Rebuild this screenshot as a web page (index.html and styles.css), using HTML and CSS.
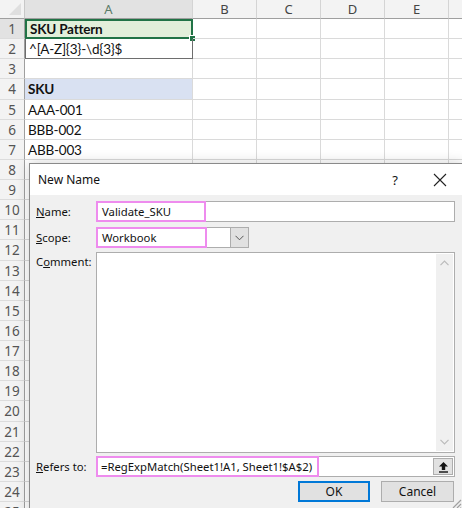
FILE: index.html
```html
<!DOCTYPE html>
<html lang="en">

<head>
    <meta charset="UTF-8">
    <title>New Name - Validate_SKU</title>
    <link rel="stylesheet" href="styles.css">
</head>

<body>
    <div class="sheet">
        <div class="corner"><span class="corner-tri"></span></div>
        <div class="col-head selected">A</div>
        <div class="col-head">B</div>
        <div class="col-head">C</div>
        <div class="col-head">D</div>
        <div class="col-head">E</div>
        <div class="col-head"></div>

        <div class="row-head selected">1</div>
        <div class="cell active bold pattern">SKU Pattern<span class="fill-handle"></span></div>
        <div class="cell"></div><div class="cell"></div><div class="cell"></div><div class="cell"></div><div class="cell"></div>

        <div class="row-head">2</div>
        <div class="cell boxed">^[A-Z]{3}-\d{3}$</div>
        <div class="cell"></div><div class="cell"></div><div class="cell"></div><div class="cell"></div><div class="cell"></div>

        <div class="row-head">3</div>
        <div class="cell"></div><div class="cell"></div><div class="cell"></div><div class="cell"></div><div class="cell"></div><div class="cell"></div>

        <div class="row-head">4</div>
        <div class="cell bold header-fill">SKU</div>
        <div class="cell"></div><div class="cell"></div><div class="cell"></div><div class="cell"></div><div class="cell"></div>

        <div class="row-head">5</div>
        <div class="cell">AAA-001</div>
        <div class="cell"></div><div class="cell"></div><div class="cell"></div><div class="cell"></div><div class="cell"></div>

        <div class="row-head">6</div>
        <div class="cell">BBB-002</div>
        <div class="cell"></div><div class="cell"></div><div class="cell"></div><div class="cell"></div><div class="cell"></div>

        <div class="row-head">7</div>
        <div class="cell">ABB-003</div>
        <div class="cell"></div><div class="cell"></div><div class="cell"></div><div class="cell"></div><div class="cell"></div>

        <div class="row-head">8</div><div class="cell"></div><div class="cell"></div><div class="cell"></div><div class="cell"></div><div class="cell"></div><div class="cell"></div>
        <div class="row-head">9</div><div class="cell"></div><div class="cell"></div><div class="cell"></div><div class="cell"></div><div class="cell"></div><div class="cell"></div>
        <div class="row-head">10</div><div class="cell"></div><div class="cell"></div><div class="cell"></div><div class="cell"></div><div class="cell"></div><div class="cell"></div>
        <div class="row-head">11</div><div class="cell"></div><div class="cell"></div><div class="cell"></div><div class="cell"></div><div class="cell"></div><div class="cell"></div>
        <div class="row-head">12</div><div class="cell"></div><div class="cell"></div><div class="cell"></div><div class="cell"></div><div class="cell"></div><div class="cell"></div>
        <div class="row-head">13</div><div class="cell"></div><div class="cell"></div><div class="cell"></div><div class="cell"></div><div class="cell"></div><div class="cell"></div>
        <div class="row-head">14</div><div class="cell"></div><div class="cell"></div><div class="cell"></div><div class="cell"></div><div class="cell"></div><div class="cell"></div>
        <div class="row-head">15</div><div class="cell"></div><div class="cell"></div><div class="cell"></div><div class="cell"></div><div class="cell"></div><div class="cell"></div>
        <div class="row-head">16</div><div class="cell"></div><div class="cell"></div><div class="cell"></div><div class="cell"></div><div class="cell"></div><div class="cell"></div>
        <div class="row-head">17</div><div class="cell"></div><div class="cell"></div><div class="cell"></div><div class="cell"></div><div class="cell"></div><div class="cell"></div>
        <div class="row-head">18</div><div class="cell"></div><div class="cell"></div><div class="cell"></div><div class="cell"></div><div class="cell"></div><div class="cell"></div>
        <div class="row-head">19</div><div class="cell"></div><div class="cell"></div><div class="cell"></div><div class="cell"></div><div class="cell"></div><div class="cell"></div>
        <div class="row-head">20</div><div class="cell"></div><div class="cell"></div><div class="cell"></div><div class="cell"></div><div class="cell"></div><div class="cell"></div>
        <div class="row-head">21</div><div class="cell"></div><div class="cell"></div><div class="cell"></div><div class="cell"></div><div class="cell"></div><div class="cell"></div>
        <div class="row-head">22</div><div class="cell"></div><div class="cell"></div><div class="cell"></div><div class="cell"></div><div class="cell"></div><div class="cell"></div>
        <div class="row-head">23</div><div class="cell"></div><div class="cell"></div><div class="cell"></div><div class="cell"></div><div class="cell"></div><div class="cell"></div>
        <div class="row-head">24</div><div class="cell"></div><div class="cell"></div><div class="cell"></div><div class="cell"></div><div class="cell"></div><div class="cell"></div>
        <div class="row-head">25</div><div class="cell"></div><div class="cell"></div><div class="cell"></div><div class="cell"></div><div class="cell"></div><div class="cell"></div>
    </div>

    <!-- New Name dialog floating over the sheet -->
    <div class="dialog">
        <div class="title-bar">
            <span class="title">New Name</span>
            <span class="title-btn">?</span>
            <span class="title-btn close">
                <svg width="14" height="14" viewBox="0 0 14 14"><path d="M1 1L13 13M13 1L1 13" stroke="#222" stroke-width="1.1" fill="none"/></svg>
            </span>
        </div>

        <div class="dialog-body">
            <div class="form-row">
                <label class="label"><u>N</u>ame:</label>
                <div class="field">
                    <span class="mark name-mark">Validate_SKU</span>
                </div>
            </div>

            <div class="form-row">
                <label class="label"><u>S</u>cope:</label>
                <div class="combo">
                    <span class="mark scope-mark">Workbook</span>
                    <span class="combo-btn">
                        <svg width="9" height="6" viewBox="0 0 9 6"><path d="M0.5 0.8L4.5 4.8L8.5 0.8" stroke="#555" stroke-width="1" fill="none"/></svg>
                    </span>
                </div>
            </div>

            <div class="form-row top">
                <label class="label">C<u>o</u>mment:</label>
                <div class="textarea">
                    <div class="scrollbar">
                        <svg width="9" height="6" viewBox="0 0 9 6"><path d="M0.5 5.2L4.5 1.2L8.5 5.2" stroke="#bbb" stroke-width="1.2" fill="none"/></svg>
                        <svg width="9" height="6" viewBox="0 0 9 6"><path d="M0.5 0.8L4.5 4.8L8.5 0.8" stroke="#bbb" stroke-width="1.2" fill="none"/></svg>
                    </div>
                </div>
            </div>

            <div class="form-row refers">
                <label class="label"><u>R</u>efers to:</label>
                <div class="field">
                    <span class="mark refers-mark">=RegExpMatch(Sheet1!A1, Sheet1!$A$2)</span>
                    <span class="collapse-btn">
                        <svg width="11" height="12" viewBox="0 0 11 12"><path d="M5.5 1L1 5.5H3.8V9H7.2V5.5H10Z" fill="#111"/><rect x="1" y="10.3" width="9" height="1.4" fill="#111"/></svg>
                    </span>
                </div>
            </div>

            <div class="button-row">
                <span class="button default">OK</span>
                <span class="button">Cancel</span>
            </div>

            <svg class="grip" width="12" height="12" viewBox="0 0 12 12"><path d="M11 3L3 11M11 7L7 11M11 10.5L10.5 11" stroke="#a0a0a0" stroke-width="1.2"/></svg>
        </div>
    </div>
</body>

</html>
```

FILE: styles.css
```css
:root {
    --grid-line: #dadada;
    --head-bg: #f3f3f3;
    --head-line: #9f9f9f;
    --excel-green: #217346;
    --dialog-bg: #f0f0f0;
    --ctrl-border: #adadad;
    --mark: #ee8cee;
}

body {
    margin: 0;
    width: 462px;
    height: 508px;
    overflow: hidden;
    position: relative;
    background: #ffffff;
    font-family: "Lato", "Liberation Sans", sans-serif;
}

.sheet {
    display: grid;
    grid-template-columns: 25px 168px 64px 64px 64px 64px 64px;
    grid-template-rows: 19px;
    grid-auto-rows: 20.13px;
}

.corner,
.col-head,
.row-head,
.cell {
    box-sizing: border-box;
}

.corner {
    background-color: var(--head-bg);
    border-right: 1px solid #c8c8c8;
    border-bottom: 1px solid var(--head-line);
    position: relative;
}

.corner-tri {
    position: absolute;
    right: 3px;
    bottom: 3px;
    width: 0;
    height: 0;
    border-left: 12px solid transparent;
    border-bottom: 12px solid #dfdfdf;
}

.col-head {
    background-color: var(--head-bg);
    border-right: 1px solid #d4d4d4;
    border-bottom: 1px solid var(--head-line);
    color: #444;
    font-family: "Noto Sans", sans-serif;
    font-size: 13px;
    text-align: center;
    line-height: 18px;
}

.col-head.selected {
    background-color: #e2e2e2;
    color: #5a7b68;
}

.row-head {
    background-color: var(--head-bg);
    border-right: 1px solid var(--head-line);
    border-bottom: 1px solid #dcdcdc;
    color: #555;
    font-family: "Noto Sans", sans-serif;
    font-size: 13.5px;
    text-align: center;
    line-height: 20px;
}

.row-head.selected {
    background-color: #e2e2e2;
}

.cell {
    border-right: 1px solid var(--grid-line);
    border-bottom: 1px solid var(--grid-line);
    font-size: 13.5px;
    letter-spacing: -0.2px;
    line-height: 20px;
    padding: 0 3px;
    white-space: nowrap;
    color: #111;
    position: relative;
}

.bold {
    font-weight: bold;
}

.pattern {
    background-color: #e2efda;
}

.active {
    border: 2px solid var(--excel-green);
    padding-left: 3px;
    line-height: 16px;
}

.fill-handle {
    position: absolute;
    right: -5px;
    bottom: -5px;
    width: 5px;
    height: 5px;
    background-color: var(--excel-green);
    border: 1px solid #ffffff;
}

.boxed {
    border-left: 1px solid #6e6e6e;
    border-right: 1px solid #6e6e6e;
    border-bottom: 1px solid #6e6e6e;
}

.header-fill {
    background-color: #d9e1f2;
}

/* dialog */

.dialog {
    position: absolute;
    left: 29px;
    top: 163px;
    width: 434px;
    height: 370px;
    box-sizing: border-box;
    border: 1px solid #8a8a8a;
    background-color: var(--dialog-bg);
    box-shadow: 0 0 12px rgba(0, 0, 0, 0.18);
    font-family: "Noto Sans", "Liberation Sans", sans-serif;
    font-size: 11.3px;
    color: #111;
}

.title-bar {
    height: 31px;
    background-color: #ffffff;
    display: flex;
    align-items: center;
}

.title {
    flex: 1;
    padding-left: 8px;
    font-size: 12px;
}

.title-btn {
    width: 46px;
    text-align: center;
    font-size: 13px;
    display: flex;
    justify-content: center;
}

.close {
    width: 44px;
}

.dialog-body {
    padding: 6px 7px 0 6px;
    display: flex;
    flex-direction: column;
    position: relative;
    height: 320px;
}

.form-row {
    display: flex;
    align-items: center;
    margin-bottom: 4px;
}

.form-row.top {
    align-items: flex-start;
    margin-bottom: 3px;
}

.form-row.refers {
    margin-bottom: 4px;
}

.label {
    width: 60px;
    flex: none;
}

.form-row.top .label {
    padding-top: 2px;
}

.field {
    flex: 1;
    height: 21px;
    box-sizing: border-box;
    border: 1px solid var(--ctrl-border);
    background-color: #ffffff;
    display: flex;
    align-items: stretch;
}

.mark {
    box-sizing: border-box;
    border: 2px solid var(--mark);
    margin: -1px 0 -1px -1px;
    padding-left: 4px;
    display: flex;
    align-items: center;
    white-space: nowrap;
}

.name-mark {
    width: 110px;
}

.scope-mark {
    width: 111px;
}

.refers-mark {
    width: 223px;
    padding-left: 3px;
}

.combo {
    width: 153px;
    height: 21px;
    box-sizing: border-box;
    border: 1px solid var(--ctrl-border);
    background-color: #ffffff;
    display: flex;
    align-items: stretch;
    margin-top: 1px;
}

.combo-btn {
    margin-left: auto;
    width: 18px;
    box-sizing: border-box;
    background-color: #e1e1e1;
    border-left: 1px solid var(--ctrl-border);
    display: flex;
    align-items: center;
    justify-content: center;
}

.textarea {
    flex: 1;
    height: 201px;
    box-sizing: border-box;
    border: 1px solid var(--ctrl-border);
    background-color: #ffffff;
    display: flex;
    justify-content: flex-end;
    padding: 1px;
}

.scrollbar {
    width: 17px;
    background-color: #f0f0f0;
    display: flex;
    flex-direction: column;
    justify-content: space-between;
    align-items: center;
    padding: 6px 0;
}

.collapse-btn {
    margin: 1px 1px 1px auto;
    width: 20px;
    box-sizing: border-box;
    background-color: #e1e1e1;
    border: 1px solid var(--ctrl-border);
    display: flex;
    align-items: center;
    justify-content: center;
}

.button-row {
    display: flex;
    justify-content: flex-end;
    gap: 11px;
    padding-right: 1px;
}

.button {
    width: 73px;
    height: 21px;
    box-sizing: border-box;
    border: 1px solid var(--ctrl-border);
    background-color: #e1e1e1;
    display: flex;
    align-items: center;
    justify-content: center;
    font-size: 12px;
}

.button.default {
    width: 72px;
    border: 2px solid #0078d7;
}

.grip {
    position: absolute;
    right: 0;
    top: 302px;
}
```
